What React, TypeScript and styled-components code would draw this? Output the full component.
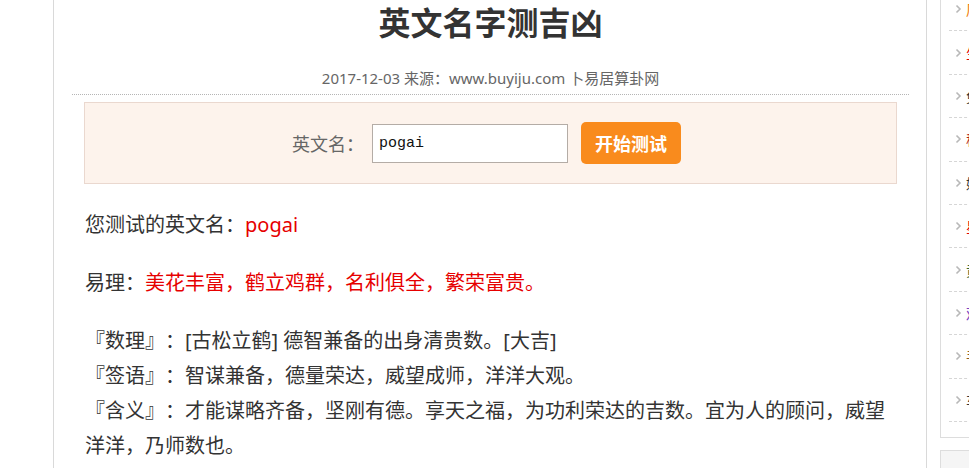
import styled, { createGlobalStyle } from "styled-components";

const GlobalStyle = createGlobalStyle`
  html, body {
    margin: 0;
    padding: 0;
    background: #ffffff;
    overflow: hidden;
  }
  body {
    font-family: "Noto Sans", "Noto Sans CJK SC", sans-serif;
    color: #333333;
    text-spacing-trim: space-all;
  }
`;

const sideLinks = [
  { text: "周公解梦大全查询", color: "#f07a00" },
  { text: "生辰八字算命详批", color: "#e00000" },
  { text: "免费算命最准的网站", color: "#333333" },
  { text: "称骨算命八字称重", color: "#b02020" },
  { text: "姓名测试打分", color: "#333333" },
  { text: "星座运势查询", color: "#e00000" },
  { text: "黄道吉日查询", color: "#336633" },
  { text: "观音灵签抽签", color: "#7a3fc0" },
  { text: "手机号码测吉凶", color: "#8a5a20" },
  { text: "车牌号码测吉凶", color: "#333333" },
];

const Chevron = () => (
  <svg width="7" height="10" viewBox="0 0 7 10">
    <path d="M1.5 1.5L5 5L1.5 8.5" fill="none" stroke="#b8b8b8" strokeWidth="1.6" />
  </svg>
);

export default function App() {
  return (
    <>
      <GlobalStyle />
      <Page>
        <Main>
          <Title>英文名字测吉凶</Title>
          <Meta>2017-12-03 来源：www.buyiju.com 卜易居算卦网</Meta>
          <FormBox>
            <Label>英文名：</Label>
            <NameInput type="text" defaultValue="pogai" />
            <Button>开始测试</Button>
          </FormBox>
          <Para>
            您测试的英文名：<Red>pogai</Red>
          </Para>
          <Para>
            易理：<Red>美花丰富，鹤立鸡群，名利俱全，繁荣富贵。</Red>
          </Para>
          <Para>
            『数理』：[古松立鹤] 德智兼备的出身清贵数。[大吉]
            <br />
            『签语』：智谋兼备，德量荣达，威望成师，洋洋大观。
            <br />
            『含义』：才能谋略齐备，坚刚有德。享天之福，为功利荣达的吉数。宜为人的顾问，威望洋洋，乃师数也。
          </Para>
        </Main>
        <Side>
          <SideBox>
            {sideLinks.map((item, index) => (
              <SideRow key={index}>
                <Chevron />
                <SideLink color={item.color}>{item.text}</SideLink>
              </SideRow>
            ))}
          </SideBox>
          <GreyBox />
        </Side>
      </Page>
    </>
  );
}

const Page = styled.div`
  display: flex;
  align-items: flex-start;
  width: 969px;
  height: 468px;
  overflow: hidden;
  padding-left: 53px;
  box-sizing: border-box;
  gap: 13px;
`;

const Main = styled.div`
  flex: 0 0 874px;
  box-sizing: border-box;
  height: 468px;
  border-left: 1px solid #d9d9d9;
  border-right: 1px solid #d9d9d9;
  padding: 0 17px 0 18px;
`;

const Title = styled.h1`
  margin: 0;
  font-size: 32px;
  line-height: 46px;
  font-weight: 700;
  text-align: center;
  color: #333333;
`;

const Meta = styled.div`
  margin-top: 20px;
  padding-bottom: 4px;
  font-size: 15px;
  line-height: 24px;
  text-align: center;
  color: #666666;
  border-bottom: 1px dotted #b5b5b5;
`;

const FormBox = styled.div`
  margin: 7px 12px 0;
  height: 80px;
  display: flex;
  align-items: center;
  justify-content: center;
  padding-right: 8px;
  background: #fdf3ec;
  border: 1px solid #ead8cf;
`;

const Label = styled.span`
  font-size: 18px;
  color: #666666;
  width: 72px;
  margin-right: 8px;
`;

const NameInput = styled.input`
  width: 196px;
  height: 39px;
  box-sizing: border-box;
  border: 1px solid #b4aca6;
  padding: 0 6px;
  font-family: "Liberation Mono", monospace;
  font-size: 15px;
  color: #111111;
  background: #ffffff;
  outline: none;
  margin-right: 13px;
`;

const Button = styled.button`
  width: 100px;
  height: 42px;
  border: none;
  border-radius: 5px;
  background: #f98b1d;
  color: #ffffff;
  font-family: "Noto Sans CJK SC", sans-serif;
  font-size: 18px;
  font-weight: 700;
  cursor: pointer;
`;

const Para = styled.p`
  margin: 23px 0 0;
  padding: 0 12px 0 13px;
  font-size: 20px;
  line-height: 35px;
  color: #333333;
`;

const Red = styled.span`
  color: #e60000;
`;

const Side = styled.div`
  flex: 0 0 300px;
  display: flex;
  flex-direction: column;
  gap: 12px;
`;

const SideBox = styled.div`
  margin-top: -12px;
  border: 1px solid #dddddd;
  border-top: none;
  padding: 0 0 15px 8px;
`;

const SideRow = styled.div`
  height: 43.4px;
  box-sizing: border-box;
  display: flex;
  align-items: center;
  gap: 4px;
  padding-left: 6px;
  border-bottom: 1px dashed #d6d6d6;
  white-space: nowrap;
`;

const SideLink = styled.a`
  font-size: 14px;
  color: ${(props) => props.color};
`;

const GreyBox = styled.div`
  height: 60px;
  background: #f5f5f5;
  border: 1px solid #dddddd;
`;
